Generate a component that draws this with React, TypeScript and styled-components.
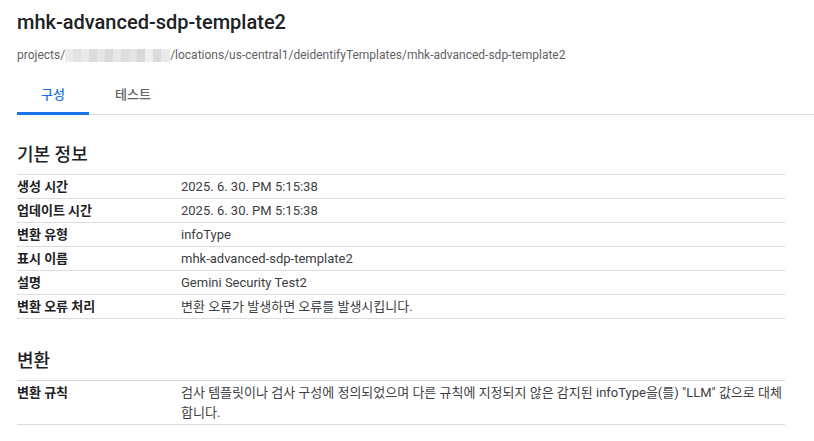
import React from "react";
import styled, { createGlobalStyle } from "styled-components";

const Global = createGlobalStyle`
  html, body { margin: 0; padding: 0; background: #fff; }
  body { font-family: Roboto, "Noto Sans CJK KR", "Noto Sans", sans-serif; color: #202124; }
`;

const Page = styled.div`
  padding: 8px 0 0 17px;
`;

const Title = styled.h1`
  margin: 0;
  font-size: 20px;
  line-height: 28px;
  font-weight: 500;
  color: #202124;
`;

const Path = styled.div`
  margin-top: 11px;
  font-size: 12px;
  line-height: 16px;
  color: #5f6368;
  display: flex;
  align-items: center;
  white-space: nowrap;
`;

const Redacted = styled.span`
  display: inline-block;
  width: 105px;
  height: 13px;
  background:
    linear-gradient(90deg,
      #ececec 0 8px, #e2e2e4 8px 16px, #eaeaea 16px 24px, #dcdcdf 24px 32px,
      #e6e6e6 32px 40px, #d9d9dc 40px 48px, #e8e8e8 48px 56px, #dedee0 56px 64px,
      #e4e4e4 64px 72px, #d8d8db 72px 80px, #efefef 80px 88px, #dadadc 88px 96px,
      #e9e9e9 96px 105px);
`;

const Tabs = styled.div`
  margin-top: 12px;
  display: flex;
  border-bottom: 1px solid #dadce0;
`;

const Tab = styled.div<{ $active?: boolean }>`
  width: 72px;
  height: 40px;
  box-sizing: border-box;
  display: flex;
  align-items: center;
  justify-content: center;
  font-size: 13px;
  font-weight: 500;
  color: ${(p) => (p.$active ? "#1a73e8" : "#5f6368")};
  border-bottom: 3px solid ${(p) => (p.$active ? "#1a73e8" : "transparent")};
  margin-bottom: -1px;
  & + & { margin-left: 8px; }
`;

const Section = styled.section<{ $gap: number }>`
  padding-right: 29px;
  margin-top: ${(p) => p.$gap}px;
`;

const Heading = styled.h2`
  margin: 0;
  font-size: 18px;
  line-height: 24px;
  font-weight: 500;
  color: #202124;
  padding-bottom: 7px;
`;

const Table = styled.div`
  border-bottom: 1px solid #dadce0;
`;

const Row = styled.div`
  display: grid;
  grid-template-columns: 164px 1fr;
  border-top: 1px solid #dadce0;
  padding: 2px 0 1px;
  font-size: 13px;
  line-height: 20px;
`;

const Label = styled.div`
  font-weight: 700;
  color: #202124;
`;

const Value = styled.div`
  color: #3c4043;
`;

const rows1: [string, string][] = [
  ["생성 시간", "2025. 6. 30. PM 5:15:38"],
  ["업데이트 시간", "2025. 6. 30. PM 5:15:38"],
  ["변환 유형", "infoType"],
  ["표시 이름", "mhk-advanced-sdp-template2"],
  ["설명", "Gemini Security Test2"],
  ["변환 오류 처리", "변환 오류가 발생하면 오류를 발생시킵니다."],
];

export default function App() {
  return (
    <>
      <Global />
      <Page>
        <Title>mhk-advanced-sdp-template2</Title>
        <Path>
          projects/<Redacted />/locations/us-central1/deidentifyTemplates/mhk-advanced-sdp-template2
        </Path>
        <Tabs>
          <Tab $active>구성</Tab>
          <Tab>테스트</Tab>
        </Tabs>
        <Section $gap={28}>
          <Heading>기본 정보</Heading>
          <Table>
            {rows1.map(([k, v]) => (
              <Row key={k}>
                <Label>{k}</Label>
                <Value>{v}</Value>
              </Row>
            ))}
          </Table>
        </Section>
        <Section $gap={30}>
          <Heading>변환</Heading>
          <Table>
            <Row>
              <Label>변환 규칙</Label>
              <Value>
                검사 템플릿이나 검사 구성에 정의되었으며 다른 규칙에 지정되지 않은 감지된 infoType을(를) "LLM" 값으로 대체합니다.
              </Value>
            </Row>
          </Table>
        </Section>
      </Page>
    </>
  );
}
